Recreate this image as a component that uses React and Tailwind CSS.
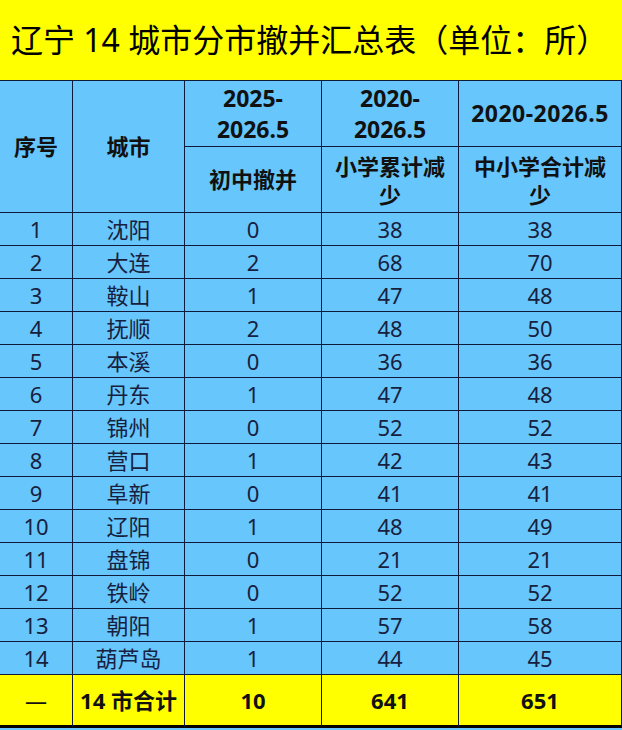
import React from "react";

const rows = [
  [1, "沈阳", 0, 38, 38],
  [2, "大连", 2, 68, 70],
  [3, "鞍山", 1, 47, 48],
  [4, "抚顺", 2, 48, 50],
  [5, "本溪", 0, 36, 36],
  [6, "丹东", 1, 47, 48],
  [7, "锦州", 0, 52, 52],
  [8, "营口", 1, 42, 43],
  [9, "阜新", 0, 41, 41],
  [10, "辽阳", 1, 48, 49],
  [11, "盘锦", 0, 21, 21],
  [12, "铁岭", 0, 52, 52],
  [13, "朝阳", 1, 57, 58],
  [14, "葫芦岛", 1, 44, 45],
];

const cell =
  "flex items-center justify-center text-center border-r border-b border-[#101a3c]";

const App = () => {
  return (
    <div
      className="w-[622px] h-[730px] bg-[#67c6fb] flex flex-col overflow-hidden"
      style={{ fontFamily: '"Noto Sans", "Noto Sans CJK SC", sans-serif' }}
    >
      {/* title band */}
      <div className="h-[80px] shrink-0 bg-[#ffff00] flex items-center pl-[11px] text-[32px] text-black leading-none">
        辽宁 14 城市分市撤并汇总表（单位：所）
      </div>

      <div className="grid grid-cols-[73px_112px_137px_137px_163px] grid-rows-[66px_66px_repeat(14,33px)_53px] border-t border-[#101a3c]">
        {/* header */}
        <div className={`${cell} row-span-2 font-bold text-[22px] text-[#111]`}>序号</div>
        <div className={`${cell} row-span-2 font-bold text-[22px] text-[#111]`}>城市</div>
        <div className={`${cell} font-bold text-[23px] leading-[31px] text-[#111]`}>
          2025-
          <br />
          2026.5
        </div>
        <div className={`${cell} font-bold text-[23px] leading-[31px] text-[#111]`}>
          2020-
          <br />
          2026.5
        </div>
        <div className={`${cell} font-bold text-[23px] tracking-[0.5px] text-[#111]`}>2020-2026.5</div>
        <div className={`${cell} font-bold text-[22px] text-[#111]`}>初中撤并</div>
        <div className={`${cell} font-bold text-[22px] leading-[28px] text-[#111]`}>
          小学累计减
          <br />
          少
        </div>
        <div className={`${cell} font-bold text-[22px] leading-[28px] text-[#111]`}>
          中小学合计减
          <br />
          少
        </div>

        {/* body */}
        {rows.map((r) =>
          r.map((v, i) => (
            <div key={`${r[0]}-${i}`} className={`${cell} text-[22px] leading-none text-[#17213f]`}>
              {v}
            </div>
          ))
        )}

        {/* totals */}
        {["—", "14 市合计", 10, 641, 651].map((v, i) => (
          <div
            key={i}
            className={`flex items-center justify-center bg-[#ffff00] border-r border-[#101a3c] border-b-[3px] border-b-black text-[22px] text-[#111] ${
              i === 0 ? "font-normal" : "font-bold"
            }`}
          >
            {v}
          </div>
        ))}
      </div>
    </div>
  );
};

export default App;
